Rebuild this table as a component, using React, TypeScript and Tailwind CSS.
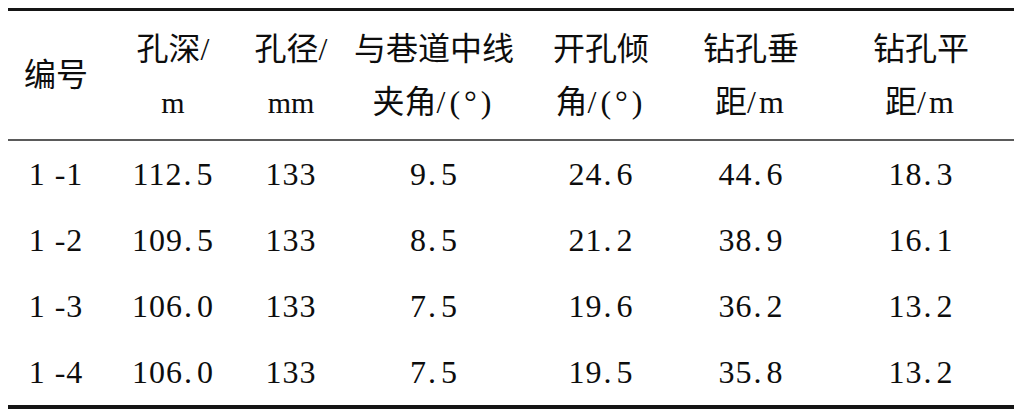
import React from "react";

const font = { fontFamily: '"Liberation Serif", "Noto Sans CJK SC", serif' };

const cols = "grid grid-cols-[96px_138px_98px_188px_146px_154px_1fr]";

const rows = [
  ["1 -1", "112.5", "133", "9.5", "24.6", "44.6", "18.3"],
  ["1 -2", "109.5", "133", "8.5", "21.2", "38.9", "16.1"],
  ["1 -3", "106.0", "133", "7.5", "19.6", "36.2", "13.2"],
  ["1 -4", "106.0", "133", "7.5", "19.5", "35.8", "13.2"],
];

function Unit({ children }: { children: React.ReactNode }) {
  return <span className="tracking-[4px]">{children}</span>;
}

function Num({ v }: { v: string }) {
  const i = v.indexOf(".");
  if (i < 0) return <>{v}</>;
  return (
    <>
      {v.slice(0, i)}
      <span className="pl-[1px] pr-[4px]">.</span>
      {v.slice(i + 1)}
    </>
  );
}

export default function App() {
  return (
    <div className="w-[1024px] h-[416px] bg-white text-[#0d0d0d]" style={font}>
      <div className="pt-[8px] pl-[8px]">
        <div className="w-[1006px] border-t-[3px] border-b-[4px] border-[#151515]">
          <div className={`${cols} h-[130px] border-b-[2px] border-[#5a5a5a] text-[32px] leading-[53px]`}>
            <div className="flex items-center justify-center">编号</div>
            <div className="flex flex-col items-center justify-center pt-[2px]">
              <div>孔深/</div>
              <div className="text-[30px]">m</div>
            </div>
            <div className="flex flex-col items-center justify-center pt-[2px]">
              <div>孔径/</div>
              <div className="text-[30px]">mm</div>
            </div>
            <div className="flex flex-col items-center justify-center pt-[2px]">
              <div>与巷道中线</div>
              <div>
                夹角<Unit>/(°)</Unit>
              </div>
            </div>
            <div className="flex flex-col items-center justify-center pt-[2px]">
              <div>开孔倾</div>
              <div>
                角<Unit>/(°)</Unit>
              </div>
            </div>
            <div className="flex flex-col items-center justify-center pt-[2px]">
              <div>钻孔垂</div>
              <div>
                距<span className="tracking-[3px]">/m</span>
              </div>
            </div>
            <div className="flex flex-col items-center justify-center pt-[2px]">
              <div>钻孔平</div>
              <div>
                距<span className="tracking-[3px]">/m</span>
              </div>
            </div>
          </div>
          <div className="text-[32px]">
            {rows.map((r, i) => (
              <div key={i} className={`${cols} h-[66px] items-center`}>
                {r.map((c, j) => (
                  <div key={j} className="flex justify-center whitespace-pre tracking-[1px]">
                    <Num v={c} />
                  </div>
                ))}
              </div>
            ))}
          </div>
        </div>
      </div>
    </div>
  );
}
